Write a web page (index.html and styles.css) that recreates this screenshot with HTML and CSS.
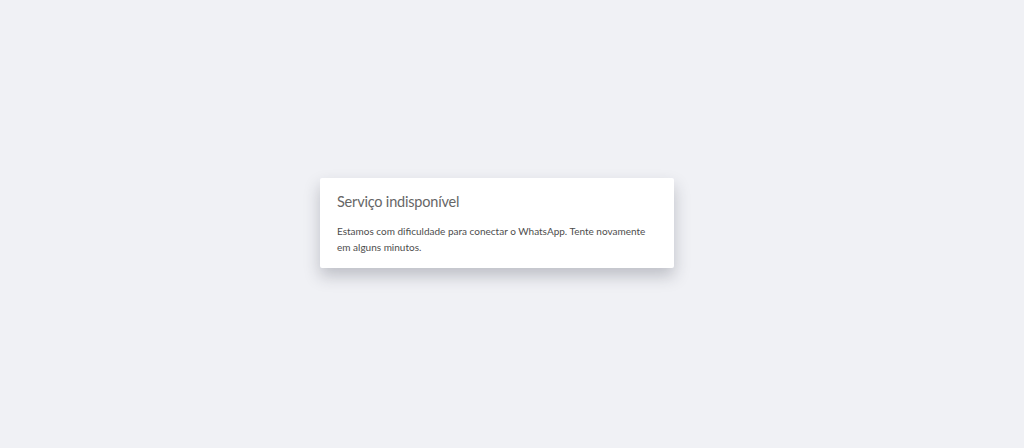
FILE: index.html
```html
<!DOCTYPE html>
<html lang="pt-BR">
<head>
	<meta charset="UTF-8">
	<title>Serviço indisponível</title>
	<link rel="stylesheet" href="styles.css">
</head>
<body>
	<div class="page">
		<div class="card">
			<h3>Serviço indisponível</h3>
			<p>Estamos com dificuldade para conectar o WhatsApp. Tente novamente em alguns minutos.</p>
		</div>
	</div>
</body>
</html>
```

FILE: styles.css
```css
body,h3,p{padding: 0;margin: 0;}
h3{font-weight: normal;}

body{background: #f0f1f5;font-family: Lato,"Noto Sans",sans-serif;}
.page{height: 448px;display: flex;align-items: center;justify-content: center;padding: 0 30px 2px 0;box-sizing: border-box;}
.card{box-sizing: border-box;width: 354px;height: 90px;padding: 13px 17px 0;background: #fff;border-radius: 2px;box-shadow: 0 8px 16px rgba(40,44,60,0.25);}
.card h3{font-size: 14.5px;line-height: 22px;letter-spacing: -0.2px;color: #666;margin-bottom: 10px;}
.card p{font-size: 10px;line-height: 16px;color: #4d4d4d;}
```
